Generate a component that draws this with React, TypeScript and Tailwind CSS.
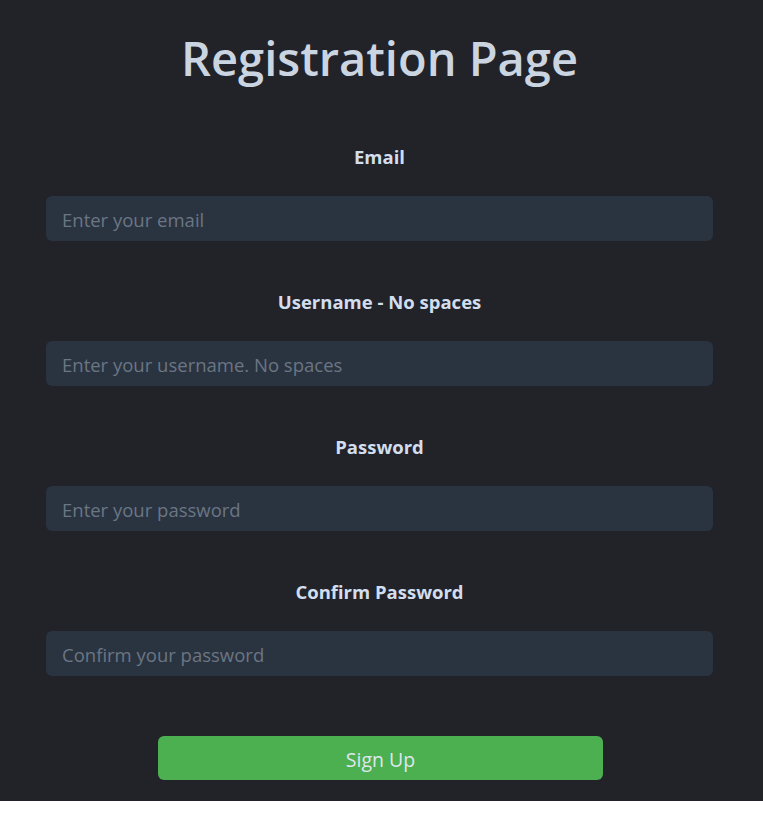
import React, { useState } from 'react';

const fields = [
  { id: 'email', label: 'Email', placeholder: 'Enter your email', type: 'email' },
  { id: 'username', label: 'Username - No spaces', placeholder: 'Enter your username. No spaces', type: 'text' },
  { id: 'password', label: 'Password', placeholder: 'Enter your password', type: 'password' },
  { id: 'confirm', label: 'Confirm Password', placeholder: 'Confirm your password', type: 'password' },
];

export default function App() {
  const [values, setValues] = useState<Record<string, string>>({});

  return (
    <div className="bg-[#212328] pl-[46px] pr-[50px] pt-[29px] pb-[21px] font-['Open_Sans',sans-serif]">
      <h1 className="text-center text-[47px] leading-[58px] font-semibold text-[#cbd5e1]">Registration Page</h1>

      <form className="mt-[58px]" onSubmit={(e) => e.preventDefault()}>
        {fields.map((f, i) => (
          <div key={f.id} className={i > 0 ? 'mt-[49px]' : ''}>
            <label htmlFor={f.id} className="block text-center text-[18.5px] leading-[24px] font-bold text-[#d2deee]">
              {f.label}
            </label>
            <input
              id={f.id}
              type={f.type}
              placeholder={f.placeholder}
              value={values[f.id] ?? ''}
              onChange={(e) => setValues({ ...values, [f.id]: e.target.value })}
              className="mt-[27px] block w-full h-[45px] rounded-md bg-[#2a3340] px-4 pt-[2px] text-[18.5px] text-[#cbd5e1] placeholder:text-[#6b7684] outline-none"
            />
          </div>
        ))}

        <div className="mt-[60px] flex justify-center">
          <button
            type="submit"
            className="ml-[2px] w-[445px] h-[44px] rounded-md bg-[#4caf50] pt-[3px] text-[19.5px] text-[#dfe6ee]"
          >
            Sign Up
          </button>
        </div>
      </form>
    </div>
  );
}
